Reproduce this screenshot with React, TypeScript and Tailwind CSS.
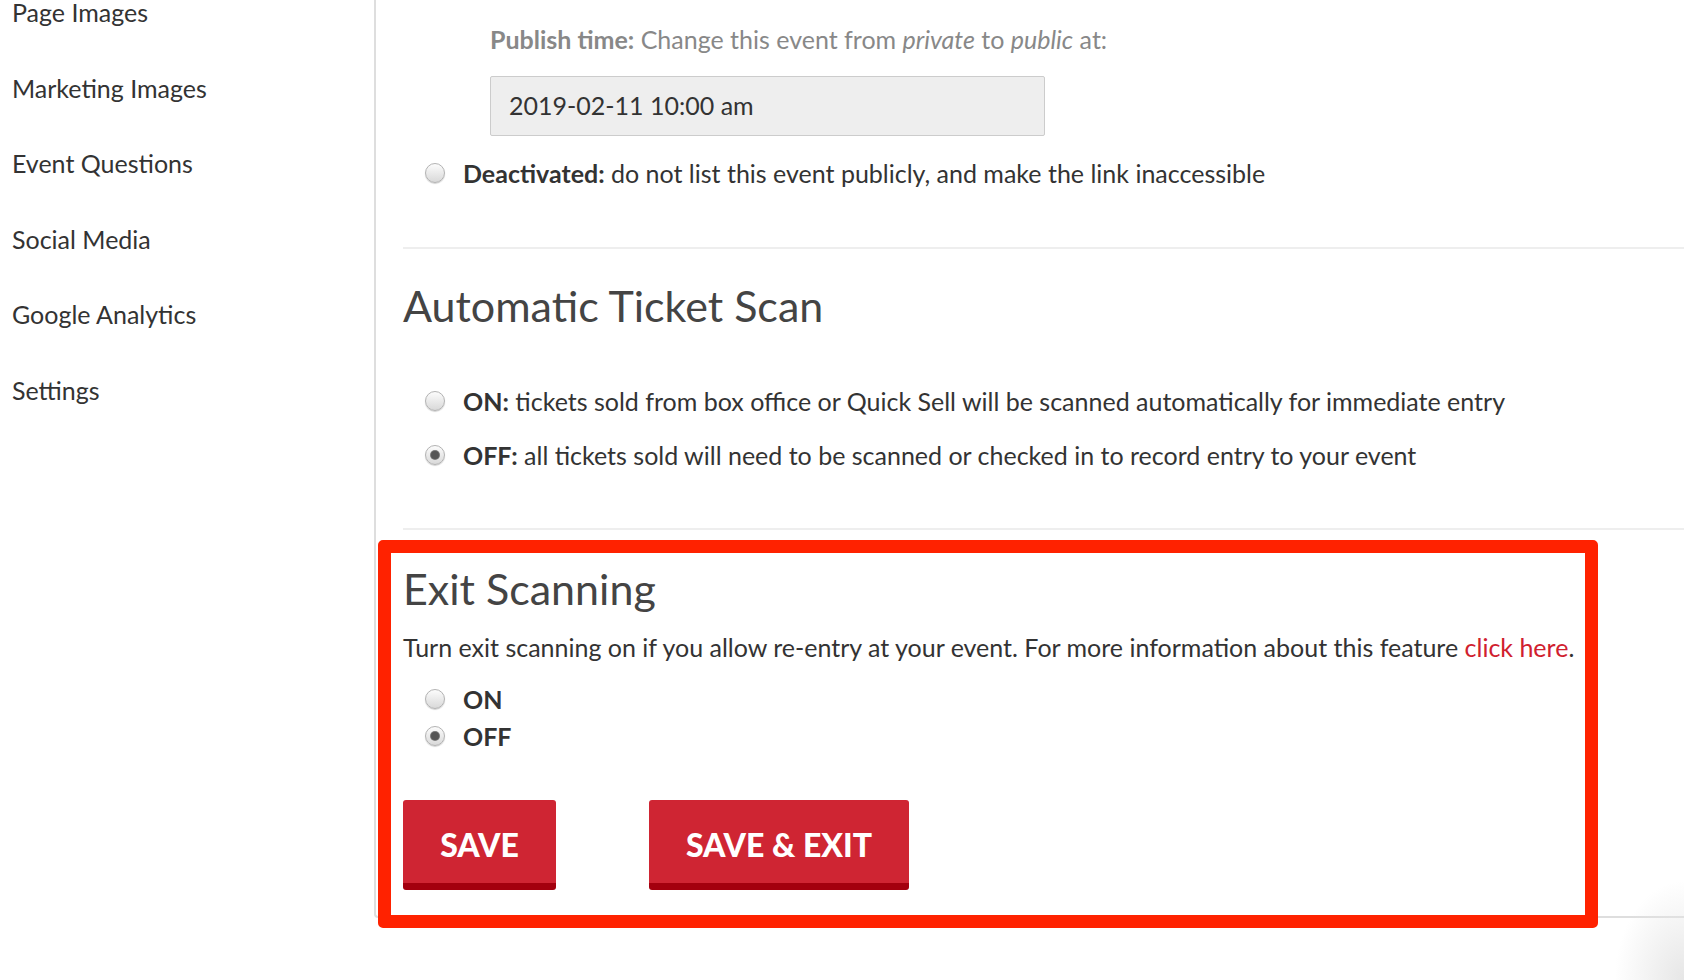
import React from 'react'

const navItems = ['Page Images', 'Marketing Images', 'Event Questions', 'Social Media', 'Google Analytics', 'Settings']

function Radio({ checked }: { checked?: boolean }) {
  return (
    <span className="flex h-[20px] w-[20px] shrink-0 items-center justify-center rounded-full border border-[#b3b3b3] bg-gradient-to-b from-[#fcfcfc] to-[#d9d9d9] shadow-[0_1px_1px_rgba(0,0,0,0.18)]">
      {checked && <span className="h-[8px] w-[8px] rounded-full bg-[#555] shadow-[0_0_0_1px_#777]" />}
    </span>
  )
}

function Option({ checked, label, text }: { checked?: boolean; label: string; text?: string }) {
  return (
    <label className="ml-[22px] flex h-[30px] items-center gap-[18px] text-[25px] leading-[30px] text-[#333]">
      <Radio checked={checked} />
      <span>
        <b className="font-bold">{label}</b>
        {text}
      </span>
    </label>
  )
}

function SaveButton({ children, width }: { children: React.ReactNode; width: string }) {
  return (
    <button
      className={`flex h-[90px] items-center justify-center rounded-[3px] border-b-[7px] border-[#a3000e] bg-[#cf2533] pt-[7px] text-[32px] font-black text-white ${width}`}
    >
      {children}
    </button>
  )
}

export default function App() {
  return (
    <div className="relative flex h-[980px] w-full overflow-hidden bg-white font-['Lato','Open_Sans',sans-serif]">
      {/* sidebar */}
      <aside className="w-[374px] shrink-0">
        <ul className="-mt-[25px] pl-3 text-[25px] text-[#333]">
          {navItems.map((item) => (
            <li key={item} className="flex h-[75.5px] items-center">
              {item}
            </li>
          ))}
        </ul>
      </aside>

      {/* main panel */}
      <main className="flex-1 self-start rounded-bl-[4px] border-b-2 border-l-2 border-[#dedede] pl-[27px]">
        <div className="ml-[87px] pt-[24px] text-[25px] leading-[30px] text-[#888]">
          <b className="font-bold">Publish time:</b> Change this event from <i>private</i> to <i>public</i> at:
        </div>
        <div className="ml-[87px] mt-[22px] flex h-[60px] w-[555px] items-center rounded-[2px] border border-[#ccc] bg-[#eee] px-[18px] text-[25px] text-[#333]">
          2019-02-11 10:00 am
        </div>
        <div className="mt-[22px]">
          <Option label="Deactivated:" text=" do not list this event publicly, and make the link inaccessible" />
        </div>

        <hr className="mt-[59px] border-t-2 border-[#eee]" />

        <h2 className="mt-[32px] h-[50px] text-[43px] leading-[50px] text-[#444]">Automatic Ticket Scan</h2>
        <div className="mt-[55px]">
          <Option label="ON:" text=" tickets sold from box office or Quick Sell will be scanned automatically for immediate entry" />
        </div>
        <div className="mt-[24px]">
          <Option checked label="OFF:" text=" all tickets sold will need to be scanned or checked in to record entry to your event" />
        </div>

        <hr className="mt-[58px] border-t-2 border-[#eee]" />

        {/* highlighted exit scanning block */}
        <section className="-mb-[12px] -ml-[25px] mt-[10px] w-[1220px] rounded-[5px] border-[13px] border-[#ff2200] bg-white pb-[25px] pl-[12px] pt-[11px]">
          <h2 className="h-[50px] text-[43px] leading-[50px] text-[#444]">Exit Scanning</h2>
          <p className="mt-[18px] text-[25px] leading-[30px] text-[#333]">
            Turn exit scanning on if you allow re-entry at your event. For more information about this feature{' '}
            <a className="text-[#d0202e]">click here</a>.
          </p>
          <div className="mt-[22px]">
            <Option label="ON" />
          </div>
          <div className="mt-[7px]">
            <Option checked label="OFF" />
          </div>
          <div className="mt-[49px] flex gap-[93px]">
            <SaveButton width="w-[153px]">SAVE</SaveButton>
            <SaveButton width="w-[260px]">SAVE &amp; EXIT</SaveButton>
          </div>
        </section>
      </main>

      {/* faint shadow in the bottom-right corner */}
      <div className="pointer-events-none absolute bottom-0 right-0 h-[100px] w-[70px] bg-[radial-gradient(ellipse_at_bottom_right,#e6e6e6,transparent_70%)]" />
    </div>
  )
}
